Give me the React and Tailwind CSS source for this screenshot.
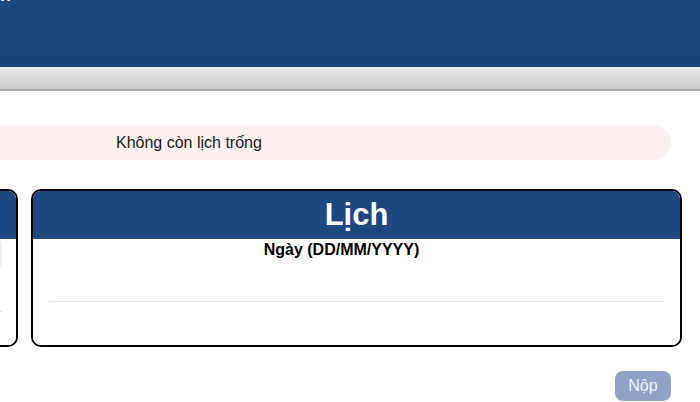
export default function App() {
    return (
        <div className="w-[700px] h-[402px] overflow-hidden bg-white font-['Liberation_Sans',Arial,sans-serif]">
            {/* header */}
            <div className="h-[67px] bg-gradient-to-b from-[#1e4883] to-[#1b427c] overflow-hidden">
                <div className="text-white text-[18px] font-bold leading-none -mt-[14px] ml-[0px]">n</div>
            </div>
            <div className="h-[24px] bg-gradient-to-b from-[#ebebed] to-[#cdcdcf] border-b-2 border-[#a9a9a9]"></div>

            {/* aviso */}
            <div className="mt-[34px] -ml-[30px] w-[701px] h-[35px] rounded-full bg-[#fcf0f0] flex items-center pl-[146px] text-[16px] text-[#1a1a1a]">
                Không còn lịch trống
            </div>

            {/* tarjetas */}
            <div className="mt-[29px] flex gap-[13px]">
                <div className="-ml-[182px] w-[200px] h-[158px] shrink-0 border-2 border-black rounded-[10px] overflow-hidden flex flex-col">
                    <div className="h-[48px] bg-[#1e4782]"></div>
                    <div className="flex-1 bg-white pt-[2px] pl-[40px] pr-[14px]">
                        <div className="h-[26px] bg-[#efefef]"></div>
                        <div className="mt-[44px] h-px bg-[#e4e4e4]"></div>
                    </div>
                </div>
                <div className="w-[651px] h-[158px] shrink-0 border-2 border-black rounded-[10px] overflow-hidden flex flex-col">
                    <div className="h-[48px] bg-[#1e4782] flex items-center justify-center text-white text-[31px] font-bold">
                        Lịch
                    </div>
                    <div className="flex-1 bg-white flex flex-col items-center">
                        <div className="mt-[1px] mr-[30px] text-[16px] font-bold text-black leading-[20px]">Ngày (DD/MM/YYYY)</div>
                        <div className="mt-[41px] w-[615px] h-px bg-[#e8e8e8]"></div>
                    </div>
                </div>
            </div>

            {/* botón */}
            <div className="mt-[24px] flex justify-end pr-[29px]">
                <button className="w-[56px] h-[30px] rounded-[8px] bg-[#8ea3c5] text-[#eef2f9] text-[16px]">
                    Nộp
                </button>
            </div>
        </div>
    );
}
